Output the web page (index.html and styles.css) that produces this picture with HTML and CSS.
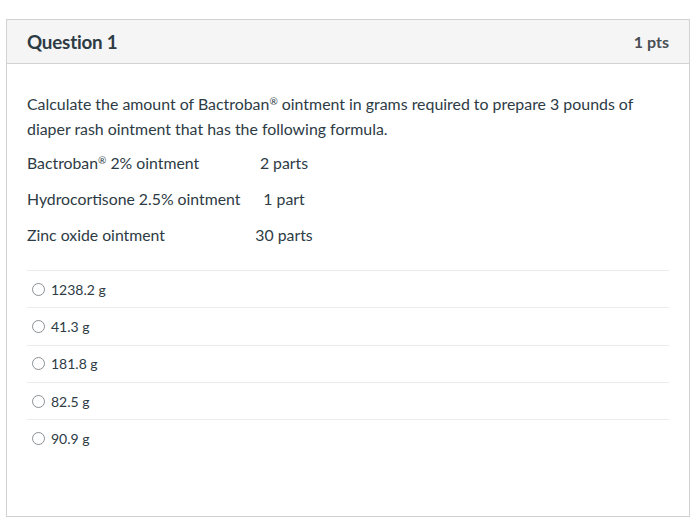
FILE: index.html
```html
<!DOCTYPE html>
<html lang="en">
<head>
<meta charset="utf-8">
<title>Question 1</title>
<link rel="stylesheet" href="styles.css">
</head>
<body>
<div class="card">
  <div class="card-header">
    <span class="q-title">Question 1</span>
    <span class="q-pts">1 pts</span>
  </div>
  <div class="card-body">
    <p class="q-text">Calculate the amount of Bactroban<sup>®</sup> ointment in grams required to prepare 3 pounds of diaper rash ointment that has the following formula.</p>
    <table class="formula">
      <tr><td class="name">Bactroban<sup>®</sup> 2% ointment</td><td class="amt">2 parts</td></tr>
      <tr><td class="name">Hydrocortisone 2.5% ointment</td><td class="amt">1 part</td></tr>
      <tr><td class="name">Zinc oxide ointment</td><td class="amt">30 parts</td></tr>
    </table>
    <div class="answers">
      <div class="answer"><span class="radio"></span><span class="a-text">1238.2 g</span></div>
      <div class="answer"><span class="radio"></span><span class="a-text">41.3 g</span></div>
      <div class="answer"><span class="radio"></span><span class="a-text">181.8 g</span></div>
      <div class="answer"><span class="radio"></span><span class="a-text">82.5 g</span></div>
      <div class="answer"><span class="radio"></span><span class="a-text">90.9 g</span></div>
    </div>
  </div>
</div>
</body>
</html>
```
FILE: styles.css
```css
html, body {
  margin: 0;
  padding: 0;
  background: #ffffff;
}
body {
  padding: 19px 0 0 6px;
  font-family: Lato, "Liberation Sans", sans-serif;
  color: #2d3b45;
}
.card {
  width: 682px;
  height: 496px;
  border: 1.5px solid #d2d2d2;
  box-sizing: content-box;
  display: flex;
  flex-direction: column;
}
.card-header {
  height: 43px;
  background: #f5f5f5;
  border-bottom: 1.5px solid #d2d2d2;
  display: flex;
  align-items: center;
  justify-content: space-between;
  padding: 0 20px 0 20px;
}
.q-title {
  font-size: 18.8px;
  font-weight: 700;
  color: #2d3b45;
  letter-spacing: -0.2px;
}
.q-pts {
  font-size: 16px;
  font-weight: 700;
  color: #4a4f55;
}
.card-body {
  padding: 27px 20px 0 20px;
}
.q-text {
  margin: 0;
  font-size: 15.9px;
  line-height: 25px;
}
sup {
  font-size: 10px;
  line-height: 0;
  vertical-align: 5px;
}
.formula {
  border-collapse: collapse;
  margin-top: 3px;
  font-size: 15.8px;
}
.formula td {
  height: 36px;
  padding: 0;
}
.formula .name {
  width: 221px;
}
.formula .amt {
  width: 72px;
  text-align: center;
}
.answers {
  margin-top: 18px;
}
.answer {
  height: 36.3px;
  border-top: 1.5px solid #ececec;
  display: flex;
  align-items: center;
  padding-left: 5px;
  gap: 6px;
  font-size: 14px;
}
.radio {
  width: 13px;
  height: 13px;
  border: 1.5px solid #8a8f94;
  border-radius: 50%;
  box-sizing: border-box;
  flex: none;
}
.a-text {
  color: #2d3b45;
}
```
